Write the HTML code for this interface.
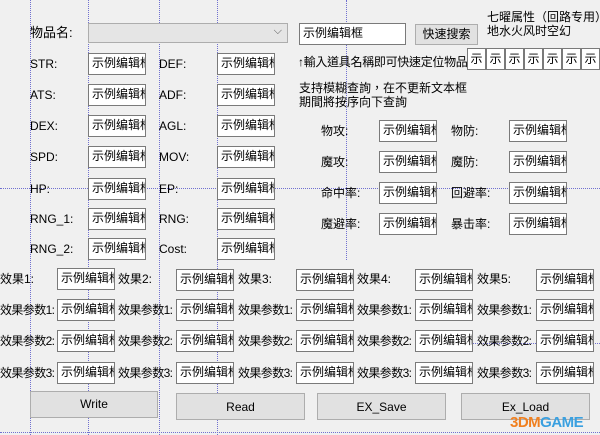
<!DOCTYPE html><html><head><meta charset="utf-8"><style>
body{margin:0;width:600px;height:435px;background:#f0f0f0;position:relative;overflow:hidden;font-family:"Liberation Sans","Noto Sans CJK SC",sans-serif;font-size:12px;color:#000}
div{position:absolute;box-sizing:border-box;white-space:nowrap}
.e{background:#fff;border:1px solid #7a7a7a;width:58px;height:22px;line-height:19px;padding-left:3px;overflow:hidden;font-size:12px}
.l{line-height:22px;height:22px}
.k{letter-spacing:-0.6px}
.b{background:#e1e1e1;border:1px solid #adadad;text-align:center}
.v{border-left:1px dotted #7070d0;top:0;height:435px;width:0}
.h{border-top:1px dotted #7070d0;height:0}
.s{background:#fff;border:1px solid #7a7a7a;width:19px;height:22px;line-height:20px;text-align:center;top:48px}
.tc{font-family:"Liberation Sans","Noto Sans CJK TC",sans-serif}
</style></head><body>
<div class="v" style="left:30px"></div><div class="v" style="left:88px"></div><div class="v" style="left:159px"></div><div class="v" style="left:217px"></div><div class="v" style="left:346px;height:260px"></div>
<div class="h" style="left:0;top:188px;width:600px"></div>
<div class="h" style="left:470px;top:343px;width:130px"></div>
<div class="h" style="left:0;top:432px;width:600px"></div>

<div class="l" style="left:30px;top:22px;font-size:13px">物品名:</div>
<div style="left:88px;top:23px;width:200px;height:20px;background:#e5e5e5;border:1px solid #adadad"><span style="position:absolute;right:5px;top:1px;color:#555;font-size:11px">⌵</span></div>
<div class="e" style="left:299px;top:23px;width:107px;height:22px">示例编辑框</div>
<div class="b" style="left:415px;top:24px;width:63px;height:21px;line-height:19px">快速搜索</div>
<div style="left:487px;top:10px;line-height:14px">七曜属性（回路专用）<br>地水火风时空幻</div>
<div class="s" style="left:467px">示</div><div class="s" style="left:486px">示</div><div class="s" style="left:505px">示</div><div class="s" style="left:524px">示</div><div class="s" style="left:543px">示</div><div class="s" style="left:562px">示</div><div class="s" style="left:581px">示</div>
<div class="tc" style="left:298px;top:54px;line-height:16px;letter-spacing:-0.3px">↑輸入道具名稱即可快速定位物品</div>
<div class="tc" style="left:299px;top:81px;line-height:14px">支持模糊查詢，在不更新文本框<br>期間將按序向下查詢</div>

<div class="l" style="left:30px;top:53px">STR:</div><div class="e" style="left:88px;top:53px">示例编辑框</div>
<div class="l" style="left:159px;top:53px">DEF:</div><div class="e" style="left:217px;top:53px">示例编辑框</div>
<div class="l" style="left:30px;top:84px">ATS:</div><div class="e" style="left:88px;top:84px">示例编辑框</div>
<div class="l" style="left:159px;top:84px">ADF:</div><div class="e" style="left:217px;top:84px">示例编辑框</div>
<div class="l" style="left:30px;top:115px">DEX:</div><div class="e" style="left:88px;top:115px">示例编辑框</div>
<div class="l" style="left:159px;top:115px">AGL:</div><div class="e" style="left:217px;top:115px">示例编辑框</div>
<div class="l" style="left:30px;top:146px">SPD:</div><div class="e" style="left:88px;top:146px">示例编辑框</div>
<div class="l" style="left:159px;top:146px">MOV:</div><div class="e" style="left:217px;top:146px">示例编辑框</div>
<div class="l" style="left:30px;top:178px">HP:</div><div class="e" style="left:88px;top:178px">示例编辑框</div>
<div class="l" style="left:159px;top:178px">EP:</div><div class="e" style="left:217px;top:178px">示例编辑框</div>
<div class="l" style="left:30px;top:208px">RNG_1:</div><div class="e" style="left:88px;top:208px">示例编辑框</div>
<div class="l" style="left:159px;top:208px">RNG:</div><div class="e" style="left:217px;top:208px">示例编辑框</div>
<div class="l" style="left:30px;top:238px">RNG_2:</div><div class="e" style="left:88px;top:238px">示例编辑框</div>
<div class="l" style="left:159px;top:238px">Cost:</div><div class="e" style="left:217px;top:238px">示例编辑框</div>

<div class="l" style="left:321px;top:120px">物攻:</div><div class="e" style="left:379px;top:120px">示例编辑框</div>
<div class="l" style="left:451px;top:120px">物防:</div><div class="e" style="left:509px;top:120px">示例编辑框</div>
<div class="l" style="left:321px;top:151px">魔攻:</div><div class="e" style="left:379px;top:151px">示例编辑框</div>
<div class="l" style="left:451px;top:151px">魔防:</div><div class="e" style="left:509px;top:151px">示例编辑框</div>
<div class="l" style="left:321px;top:182px">命中率:</div><div class="e" style="left:379px;top:182px">示例编辑框</div>
<div class="l" style="left:451px;top:182px">回避率:</div><div class="e" style="left:509px;top:182px">示例编辑框</div>
<div class="l" style="left:321px;top:213px">魔避率:</div><div class="e" style="left:379px;top:213px">示例编辑框</div>
<div class="l" style="left:451px;top:213px">暴击率:</div><div class="e" style="left:509px;top:213px">示例编辑框</div>

<div class="l" style="left:0;top:268px">效果1:</div><div class="e" style="left:57px;top:268px">示例编辑框</div>
<div class="l" style="left:118px;top:268px">效果2:</div><div class="e" style="left:176px;top:269px">示例编辑框</div>
<div class="l" style="left:238px;top:268px">效果3:</div><div class="e" style="left:296px;top:269px">示例编辑框</div>
<div class="l" style="left:357px;top:268px">效果4:</div><div class="e" style="left:415px;top:269px">示例编辑框</div>
<div class="l" style="left:477px;top:268px">效果5:</div><div class="e" style="left:536px;top:269px">示例编辑框</div>

<div class="l k" style="left:0;top:299px">效果参数1:</div><div class="e" style="left:57px;top:299px">示例编辑框</div>
<div class="l k" style="left:118px;top:299px">效果参数1:</div><div class="e" style="left:176px;top:299px">示例编辑框</div>
<div class="l k" style="left:238px;top:299px">效果参数1:</div><div class="e" style="left:296px;top:299px">示例编辑框</div>
<div class="l k" style="left:357px;top:299px">效果参数1:</div><div class="e" style="left:415px;top:299px">示例编辑框</div>
<div class="l k" style="left:477px;top:299px">效果参数1:</div><div class="e" style="left:536px;top:299px">示例编辑框</div>

<div class="l k" style="left:0;top:330px">效果参数2:</div><div class="e" style="left:57px;top:330px">示例编辑框</div>
<div class="l k" style="left:118px;top:330px">效果参数2:</div><div class="e" style="left:176px;top:330px">示例编辑框</div>
<div class="l k" style="left:238px;top:330px">效果参数2:</div><div class="e" style="left:296px;top:330px">示例编辑框</div>
<div class="l k" style="left:357px;top:330px">效果参数2:</div><div class="e" style="left:415px;top:330px">示例编辑框</div>
<div class="l k" style="left:477px;top:330px">效果参数2:</div><div class="e" style="left:536px;top:330px">示例编辑框</div>

<div class="l k" style="left:0;top:362px">效果参数3:</div><div class="e" style="left:57px;top:362px">示例编辑框</div>
<div class="l k" style="left:118px;top:362px">效果参数3:</div><div class="e" style="left:176px;top:362px">示例编辑框</div>
<div class="l k" style="left:238px;top:362px">效果参数3:</div><div class="e" style="left:296px;top:362px">示例编辑框</div>
<div class="l k" style="left:357px;top:362px">效果参数3:</div><div class="e" style="left:415px;top:362px">示例编辑框</div>
<div class="l k" style="left:477px;top:362px">效果参数3:</div><div class="e" style="left:536px;top:362px">示例编辑框</div>

<div class="b" style="left:30px;top:391px;width:128px;height:27px;line-height:25px">Write</div>
<div class="b" style="left:176px;top:393px;width:129px;height:27px;line-height:27px">Read</div>
<div class="b" style="left:317px;top:393px;width:129px;height:27px;line-height:27px">EX_Save</div>
<div class="b" style="left:461px;top:393px;width:129px;height:27px;line-height:27px">Ex_Load</div>
<div style="left:510px;top:414px;font-weight:bold;font-size:15px;color:#f08020;letter-spacing:-0.5px">3DM<span style="color:#3aa0e0">GAME</span></div>
</body></html>
